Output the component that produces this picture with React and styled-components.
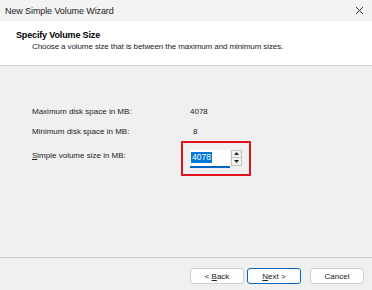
import React from "react";
import styled, { createGlobalStyle } from "styled-components";

const GlobalStyle = createGlobalStyle`
  html, body {
    margin: 0;
    padding: 0;
    background: #f0f0f0;
  }
  body {
    font-family: "Liberation Sans", Arial, sans-serif;
    color: #1a1a1a;
  }
`;

const Window = styled.div`
  width: 372px;
  height: 290px;
  display: flex;
  flex-direction: column;
  background: #f0f0f0;
  overflow: hidden;
`;

const TitleBar = styled.div`
  height: 21px;
  display: flex;
  align-items: center;
  justify-content: space-between;
  padding: 0 6px 0 5px;
  background: #f3f3f3;
  font-size: 9px;
  letter-spacing: -0.1px;
  color: #222;
`;

const CloseIcon = styled.svg`
  width: 9px;
  height: 9px;
  margin-right: 2px;
`;

const Header = styled.div`
  height: 45px;
  background: #ffffff;
  border-bottom: 1px solid #d5d5d5;
  padding: 8px 0 0 16px;
  box-sizing: border-box;
`;

const HeaderTitle = styled.div`
  font-size: 9px;
  font-weight: bold;
  letter-spacing: -0.15px;
  color: #000;
  line-height: 12px;
`;

const HeaderSub = styled.div`
  font-size: 8px;
  letter-spacing: -0.1px;
  line-height: 12px;
  padding-left: 16px;
  color: #222;
`;

const Body = styled.div`
  flex: 1;
  display: grid;
  grid-template-columns: 149px 1fr;
  grid-template-rows: 21px 19px 35px;
  align-content: start;
  align-items: center;
  padding: 35px 0 0 32px;
  font-size: 8px;
  color: #222;
`;

const Label = styled.div`
  line-height: 12px;
  align-self: ${(p) => (p.$top ? "start" : "center")};
  margin-top: ${(p) => (p.$top ? 9 : 0)}px;
`;

const Value = styled.div`
  line-height: 12px;
  padding-left: ${(p) => p.$indent || 9}px;
`;

const Highlight = styled.div`
  width: 70px;
  height: 35px;
  border: 2px solid #e0141e;
  display: flex;
  align-items: center;
  padding-left: 7px;
  box-sizing: border-box;
`;

const Field = styled.div`
  width: 40px;
  height: 18px;
  background: #fff;
  border-bottom: 2px solid #0067c0;
  box-sizing: border-box;
  display: flex;
  align-items: center;
  padding-left: 1px;
`;

const Selected = styled.span`
  background: #0078d7;
  color: #fff;
  font-size: 8.5px;
  line-height: 11px;
  padding: 0 1px;
`;

const Spinner = styled.div`
  display: flex;
  flex-direction: column;
  margin-left: 1px;
  border: 1px solid #c4c4c4;
  width: 11px;
  height: 16px;
  box-sizing: border-box;
  margin-top: -2px;
`;

const SpinButton = styled.div`
  flex: 1;
  display: flex;
  align-items: center;
  justify-content: center;
  background: #f3f3f3;
  border-top: ${(p) => (p.$down ? "1px solid #c4c4c4" : "none")};
`;

const Footer = styled.div`
  height: 33px;
  border-top: 1px solid #cfcfcf;
  display: flex;
  align-items: flex-start;
  justify-content: flex-end;
  padding: 10px 8px 0 0;
  box-sizing: border-box;
  gap: 3px;
`;

const Button = styled.div`
  width: 54px;
  height: 16px;
  box-sizing: border-box;
  display: flex;
  align-items: center;
  justify-content: center;
  background: #fdfdfd;
  border: 1px solid ${(p) => (p.$primary ? "#0067c0" : "#d0d0d0")};
  border-radius: 3px;
  font-size: 8px;
  color: #222;
  white-space: pre;
  margin-left: ${(p) => p.$gap || 0}px;
`;

const Ul = styled.span`
  text-decoration: underline;
`;

const Tri = ({ up }) => (
  <svg width="5" height="3" viewBox="0 0 5 3">
    <path d={up ? "M0 3 L2.5 0 L5 3 Z" : "M0 0 L2.5 3 L5 0 Z"} fill="#222" />
  </svg>
);

export default function App() {
  return (
    <Window>
      <GlobalStyle />
      <TitleBar>
        <span>New Simple Volume Wizard</span>
        <CloseIcon viewBox="0 0 10 10">
          <path d="M1 1 L9 9 M9 1 L1 9" stroke="#333" strokeWidth="1.1" />
        </CloseIcon>
      </TitleBar>
      <Header>
        <HeaderTitle>Specify Volume Size</HeaderTitle>
        <HeaderSub>
          Choose a volume size that is between the maximum and minimum sizes.
        </HeaderSub>
      </Header>
      <Body>
        <Label>Maximum disk space in MB:</Label>
        <Value>4078</Value>
        <Label>Minimum disk space in MB:</Label>
        <Value $indent={12}>8</Value>
        <Label $top>
          <Ul>S</Ul>imple volume size in MB:
        </Label>
        <Highlight>
          <Field>
            <Selected>4078</Selected>
          </Field>
          <Spinner>
            <SpinButton>
              <Tri up />
            </SpinButton>
            <SpinButton $down>
              <Tri />
            </SpinButton>
          </Spinner>
        </Highlight>
      </Body>
      <Footer>
        <Button>
          {"< "}
          <Ul>B</Ul>ack
        </Button>
        <Button $primary>
          <Ul>N</Ul>
          {"ext >"}
        </Button>
        <Button $gap={6}>Cancel</Button>
      </Footer>
    </Window>
  );
}
